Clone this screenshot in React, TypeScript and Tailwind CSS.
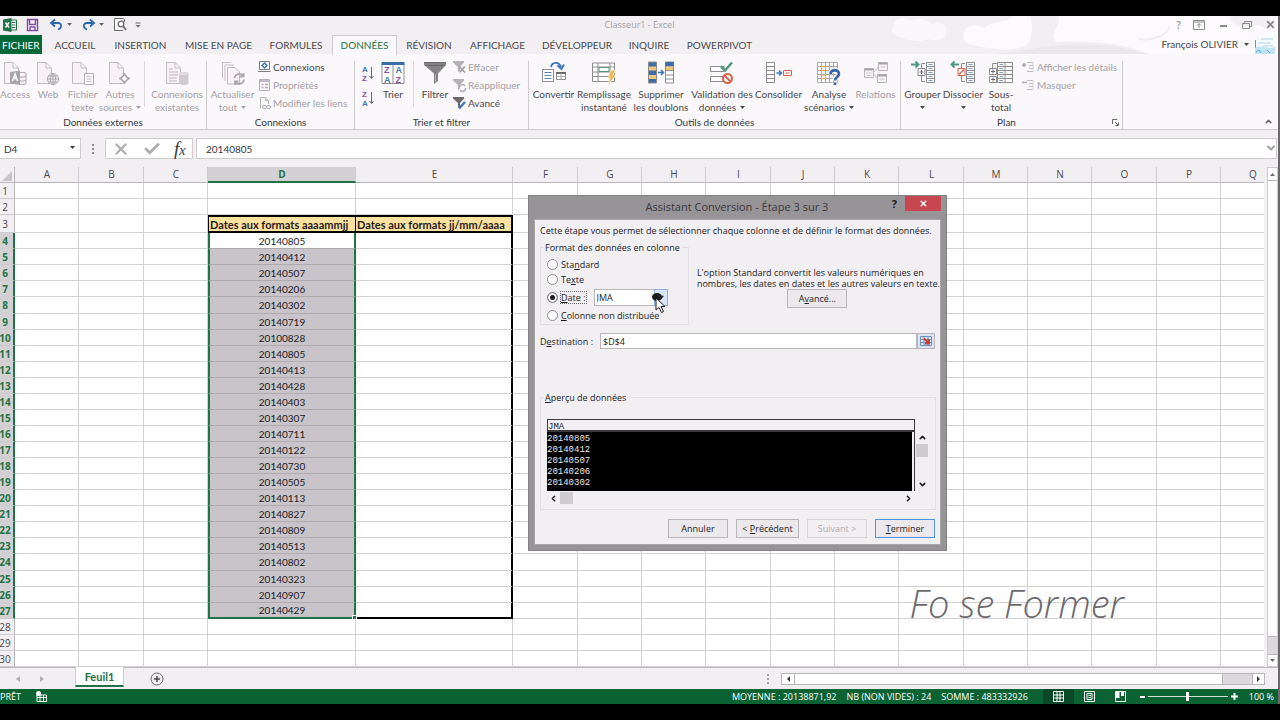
import type { ReactNode } from 'react';
import clsx from 'clsx';
import { Check, ChevronDown, ChevronLeft, ChevronRight, ChevronUp, X } from 'lucide-react';

/* ---------- data ---------- */

const tabs = [
  { label: 'ACCUEIL', width: 'w-[66px]' },
  { label: 'INSERTION', width: 'w-[65px]' },
  { label: 'MISE EN PAGE', width: 'w-[91px]' },
  { label: 'FORMULES', width: 'w-[64px]' },
  { label: 'DONNÉES', width: 'w-[65px] ml-1', active: true },
  { label: 'RÉVISION', width: 'w-[64px]' },
  { label: 'AFFICHAGE', width: 'w-[73px]' },
  { label: 'DÉVELOPPEUR', width: 'w-[86px]' },
  { label: 'INQUIRE', width: 'w-[58px]' },
  { label: 'POWERPIVOT', width: 'w-[83px]' },
];

const columns = [
  { name: 'A', width: 'w-[64px]' },
  { name: 'B', width: 'w-[65px]' },
  { name: 'C', width: 'w-[64px]' },
  { name: 'D', width: 'w-[148px]' },
  { name: 'E', width: 'w-[157px]' },
  { name: 'F', width: 'w-[65px]' },
  { name: 'G', width: 'w-[64px]' },
  { name: 'H', width: 'w-[64px]' },
  { name: 'I', width: 'w-[65px]' },
  { name: 'J', width: 'w-[64px]' },
  { name: 'K', width: 'w-[64px]' },
  { name: 'L', width: 'w-[65px]' },
  { name: 'M', width: 'w-[64px]' },
  { name: 'N', width: 'w-[64px]' },
  { name: 'O', width: 'w-[65px]' },
  { name: 'P', width: 'w-[64px]' },
  { name: 'Q', width: 'w-[64px]' },
];

const dates = [
  '20140805', '20140412', '20140507', '20140206', '20140302', '20140719',
  '20100828', '20140805', '20140413', '20140428', '20140403', '20140307',
  '20140711', '20140122', '20140730', '20140505', '20140113', '20140827',
  '20140809', '20140513', '20140802', '20140323', '20140907', '20140429',
];

const firstDateRow = 4;
const lastDateRow = firstDateRow + dates.length - 1;
const rows = Array.from({ length: 30 }, (_, i) => i + 1);

/* ---------- ribbon icons ---------- */

function Svg({ children, w = 24, h = 24 }: { children: ReactNode; w?: number; h?: number }) {
  return (
    <svg width={w} height={h} viewBox={`0 0 ${w} ${h}`} fill="none" className="shrink-0 overflow-visible" aria-hidden="true">
      {children}
    </svg>
  );
}

const page = <path d="M1.5 1.5H10L15.5 7V22.500H1.500Z M10 1.500V7H15.500" fill="#f8f2f8" stroke="#c0bcc1" />;

const AccessIcon = () => (
  <Svg>
    {page}
    <path d="M15 12.500V22.500C17 24 23 24 23 22.500V12.500C23 11 17 11 15 12.500M15 15C17 16.500 21 16.500 23 15M15 19C17 20.500 21 20.500 23 19" fill="#f8f2f8" stroke="#a9a6aa" />
    <path d="M7 11L17 9.500V24L7 22.500Z" fill="#a9a6aa" />
    <path d="M9.500 20L12 13L14.500 20M10.500 17.500H13.500" stroke="#fff" strokeWidth="1.500" />
  </Svg>
);

const WebIcon = () => (
  <Svg>
    {page}
    <circle cx="17" cy="18" r="5.500" fill="#f8f2f8" stroke="#aba8ac" />
    <path d="M11.500 18H22.500M12.500 15H21.500M12.500 21H21.500M17 12.500V23.500M17 12.500C13.500 15 13.500 21 17 23.500M17 12.500C20.500 15 20.500 21 17 23.500" stroke="#aba8ac" />
  </Svg>
);

const TextFileIcon = () => (
  <Svg>
    {page}
    <path d="M13.500 12.500H22.500V23.500H13.500Z" fill="#fcf8fc" stroke="#b3b0b4" />
    <path d="M15.500 15.500H20.500M15.500 18H20.500M15.500 20.500H20.500" stroke="#c2bfc3" />
  </Svg>
);

const OtherSourcesIcon = () => (
  <Svg>
    {page}
    <path d="M16.500 12V23M11 17.500H22" stroke="#a5a2a6" strokeWidth="1.500" />
    <path d="M16.500 13.500L20.500 17.500L16.500 21.500L12.500 17.500Z" fill="#fbf8fc" stroke="#a5a2a6" strokeWidth="1.500" />
  </Svg>
);

const ExistingIcon = () => (
  <Svg>
    {page}
    <path d="M4 8H8M4 11H13M4 14H13M4 17H12M4 20H12" stroke="#bbb8bc" />
    <path d="M14 12.500V22.500C16 24.500 22 24.500 23.500 22.500V12.500C22 10.500 16 10.500 14 12.500Z" fill="#cfccd0" />
    <ellipse cx="18.750" cy="12.500" rx="4.750" ry="1.500" fill="#dfdce0" />
  </Svg>
);

const RefreshIcon = () => (
  <Svg>
    <path d="M1.500 17V1.500H10M4 20V4H13" stroke="#c0bcc1" />
    <path d="M6.500 6.500H14L18.500 11V23H6.500Z" fill="#f8f2f8" stroke="#c0bcc1" />
    <path d="M13.500 17A5 5 0 0 1 22 14.500M22.500 12V15.500H19M23 18.500A5 5 0 0 1 14.500 21.500M14 24V20.500H17.500" stroke="#aba8ac" strokeWidth="1.800" />
  </Svg>
);

const SortLetters = ({ top, bottom }: { top: string; bottom: string }) => (
  <Svg w={13} h={17}>
    <g fontSize="8" fontWeight="700" fontFamily="Liberation Sans">
      <text x="0" y="7" fill={top === 'A' ? '#3d75b8' : '#8e4fa8'}>{top}</text>
      <text x="0" y="16" fill={bottom === 'A' ? '#3d75b8' : '#8e4fa8'}>{bottom}</text>
    </g>
    <path d="M9.500 2V13M7.500 11L9.500 13.500L11.500 11" stroke="#6b696c" />
  </Svg>
);

const SortIcon = () => (
  <Svg>
    <path d="M1 3H23V22.500H1Z" fill="#fff" stroke="#8e8b8f" />
    <path d="M.5 1H23.500V4H.5Z" fill="#3b6ea8" />
    <path d="M12 4V22.500" stroke="#8e8b8f" />
    <g fontSize="9" fontWeight="700" fontFamily="Liberation Sans">
      <text x="3" y="11.500" fill="#8e4fa8">Z</text>
      <text x="3" y="21.500" fill="#3d75b8">A</text>
      <text x="14.500" y="11.500" fill="#3d75b8">A</text>
      <text x="14.500" y="21.500" fill="#8e4fa8">Z</text>
    </g>
  </Svg>
);

const FilterIcon = () => (
  <Svg>
    <path d="M1 1H23V4L15 12.500V20L11 23V12.500L1 4Z" fill="#858286" />
    <path d="M1 1.500H23M2 4.500H22" stroke="#6c696d" />
    <path d="M12.500 13V21" stroke="#b4b1b5" />
  </Svg>
);

const ConvertIcon = () => (
  <Svg>
    <path d="M9 6C10 1 17 0 19 6M15.500 4.500L19.500 8L22 3.500" stroke="#3d75b8" strokeWidth="1.800" />
    <path d="M.5 8.500H11.500V20.500H.5Z" fill="#fff" stroke="#8e8b8f" />
    <path d="M2.500 11.500H9.500M2.500 14.500H9.500M2.500 17.500H9.500" stroke="#5e84b5" />
    <path d="M14.500 11.500H23.500V18.500H14.500Z" fill="#fff" stroke="#8e8b8f" />
    <path d="M14 12H24" stroke="#6c696d" strokeWidth="2" />
    <path d="M19 12V18.500M14.500 15.500H23.500" stroke="#aba8ac" />
  </Svg>
);

const FlashFillIcon = () => (
  <Svg>
    <path d="M.5 2H22.500V20.500H.5Z" fill="#fff" />
    <path d="M.5 2H22.500V20.500H.5ZM.5 6H22.500M.5 11H22.500M.5 15.500H22.500M6 2V20.500M18 2V20.500" stroke="#8e8b8f" />
    <path d="M7 6.500H17V10.500H7Z" fill="#fff" stroke="#5a9a7c" />
    <path d="M19 9H23.500L21 14H24L16 24L18 17H15.500Z" fill="#f0b75b" stroke="#fff" strokeWidth=".6" />
  </Svg>
);

const DuplicatesIcon = () => (
  <Svg w={26}>
    <path d="M.5 1H8.500V22H.5Z" fill="#3b6ea8" stroke="#8e8b8f" />
    <path d="M1 5.500H8V9.500H1ZM1 14H8V18H1Z" fill="#f0c878" />
    <path d="M17.500 1H25.500V22H17.500Z" fill="#fff" stroke="#8e8b8f" />
    <path d="M17.500 1H25.500V5.500H17.500Z" fill="#3b6ea8" />
    <path d="M18 5.500H25V9.500H18Z" fill="#f0c878" />
    <path d="M17.500 9.500H25.500M17.500 14H25.500M17.500 18H25.500" stroke="#8e8b8f" />
    <path d="M10 11.500H15M13 9L15.500 11.500L13 14" stroke="#3d75b8" strokeWidth="1.500" />
  </Svg>
);

const ValidationIcon = () => (
  <Svg>
    <path d="M.5 5.500H14V10.500H.5ZM.5 15.500H13V20.500H.5Z" fill="#fff" stroke="#8e8b8f" />
    <path d="M11 5.500L15 9.500L22 1.500" stroke="#4f9a7c" strokeWidth="2.500" />
    <circle cx="17.500" cy="17.500" r="4.500" fill="#fff" stroke="#d9604a" strokeWidth="2" />
    <path d="M14.500 14.500L20.500 20.500" stroke="#d9604a" strokeWidth="2" />
  </Svg>
);

const ConsolidateIcon = () => (
  <Svg w={26}>
    <path d="M.5 1.500H8.500V21.500H.5ZM.5 5.500H8.500M.5 9.500H8.500M.5 13.500H8.500M.5 17.500H8.500" fill="#fff" stroke="#8e8b8f" />
    <path d="M10.500 12H15M13 9.500L15.500 12L13 14.500" stroke="#3d75b8" strokeWidth="1.500" />
    <path d="M17.500 9.500H25.500V14.500H17.500ZM19.500 12H23.500" fill="#fff" stroke="#d9604a" />
  </Svg>
);

const WhatIfIcon = () => (
  <Svg>
    <path d="M.5 1.500H20.500V21.500H.5ZM.5 5.500H20.500M.5 9.500H20.500M.5 13.500H20.500M.5 17.500H20.500M4.500 1.500V21.500M8.500 1.500V21.500M12.500 1.500V21.500M16.500 1.500V21.500" fill="#fff" stroke="#aba8ac" />
    <path d="M4.500 5.500H8.500V9.500H4.500ZM4.500 14H8.500V17.500H4.500Z" fill="#fff" stroke="#eaa04f" strokeWidth="1.200" />
    <path d="M13.500 13C13.500 8 22 8 22 13C22 16 18 16 18 19.500M18 21.500V24" stroke="#fff" strokeWidth="5" />
    <path d="M13.500 13C13.500 8 22 8 22 13C22 16 18 16 18 19.500M18 21.500V24" stroke="#3668ac" strokeWidth="2.800" />
  </Svg>
);

const RelationsIcon = () => (
  <Svg>
    <path d="M9 12L15 5M9 12L14 18" stroke="#c0bdc1" />
    <path d="M.5 7.500H9.500V16.500H.5ZM14.500 1.500H23.500V9.500H14.500ZM13.500 13.500H22.500V21.500H13.500Z" fill="#f8f2f8" stroke="#bbb8bc" />
    <path d="M.5 8.500H9.500M14.500 2.500H23.500M13.500 14.500H22.500" stroke="#a9a6aa" strokeWidth="2" />
    <path d="M2.500 12H7.500M2.500 14.500H7.500M16.500 6H21.500M15.500 18H20.500" stroke="#c9c6ca" />
  </Svg>
);

const GroupIcon = ({ remove = false }: { remove?: boolean }) => (
  <Svg w={26}>
    <path d="M16.500 1.500H24.500V21.500H16.500ZM16.500 5.500H24.500M16.500 9.500H24.500M16.500 13.500H24.500M16.500 17.500H24.500" fill="#fff" stroke="#8e8b8f" />
    <path d="M18.500 3.500H22.500M18.500 7.500H22.500M18.500 11.500H22.500M18.500 15.500H22.500M18.500 19.500H22.500" stroke="#7d9cc4" />
    <path d="M15 2.500H11.500V7M11.500 15V20.500H15" stroke="#8e8b8f" />
    <path d="M8 7.500H15V14.500H8Z" fill="#fff" stroke={remove ? '#d9604a' : '#8e8b8f'} />
    {remove ? (
      <>
        <path d="M9 13.500L14 8.500" stroke="#d9604a" strokeWidth="1.500" />
        <path d="M9 3.500H2M4.500 .5L1.500 3.500L4.500 6.500" stroke="#4f9a7c" strokeWidth="2" />
      </>
    ) : (
      <>
        <path d="M9.500 11H13.500M11.500 9V13" stroke="#6c696d" />
        <path d="M1 3.500H8M5.500 .5L8.500 3.500L5.500 6.500" stroke="#4f9a7c" strokeWidth="2" />
      </>
    )}
  </Svg>
);

const SubtotalIcon = () => (
  <Svg w={26}>
    <path d="M9.500 1.500H24.500V21.500H9.500ZM9.500 5.500H24.500M9.500 9.500H24.500M9.500 13.500H24.500M9.500 17.500H24.500M17 1.500V21.500" fill="#fff" stroke="#8e8b8f" />
    <path d="M11.500 3.500H15M11.500 7.500H15M11.500 11.500H15M11.500 15.500H15M11.500 19.500H15" stroke="#7d9cc4" />
    <path d="M9.500 2.500H4.500V7" stroke="#8e8b8f" />
    <path d="M1.500 7.500H8.500V13.500H1.500ZM1.500 15.500H8.500V21.500H1.500Z" fill="#fff" stroke="#8e8b8f" />
    <path d="M3 10.500H7M5 8.500V12.500M3 18.500H7M5 16.500V20.500" stroke="#6c696d" />
  </Svg>
);

const ConnectionsIcon = () => (
  <Svg w={13} h={12}>
    <path d="M1.500 .5H11.500V8.500H1.500ZM0 10.500H12.500" fill="#fff" stroke="#7f7c80" />
    <path d="M6.500 2L9 4.500L6.500 7L4 4.500Z" stroke="#3d75b8" strokeWidth="1.500" />
  </Svg>
);

const PropertiesIcon = () => (
  <Svg w={13} h={12}>
    <path d="M1.500 .5H11.500V11.500H1.500Z" fill="#fbf6fb" stroke="#b4b1b5" />
    <path d="M1 2H12M3.500 5.500H5.500M3.500 8.500H5.500M7 5.500H10M7 8.500H10" stroke="#b7a6be" strokeWidth="1.500" />
  </Svg>
);

const LinksIcon = () => (
  <Svg w={13} h={12}>
    <path d="M2.500 11.500V.5H7.500L10.500 3.500V7M7.500 .5V3.500H10.500" stroke="#b9b6ba" />
    <rect x="4.500" y="8.500" width="4" height="3" rx="1.500" stroke="#b0adb1" />
    <rect x="8.500" y="8.500" width="4" height="3" rx="1.500" stroke="#b0adb1" />
  </Svg>
);

const SmallFilter = ({ kind }: { kind: 'clear' | 'reapply' | 'advanced' }) => (
  <Svg w={13} h={12}>
    <path d="M0 0H11V1.500L7 6V9.500L5 11V6L0 1.500Z" fill={kind === 'advanced' ? '#6c696d' : '#b4b1b5'} />
    {kind === 'clear' && <path d="M6.500 5.500L12 11.500M12 5.500L6.500 11.500" stroke="#a09da1" strokeWidth="1.500" />}
    {kind === 'reapply' && <path d="M6.500 8A3 3 0 0 1 12 7M12.500 9A3 3 0 0 1 7 11" stroke="#b0adb1" strokeWidth="1.500" />}
    {kind === 'advanced' && <path d="M6 11.500L12 5" stroke="#3d75b8" strokeWidth="2.500" />}
  </Svg>
);

const DetailIcon = ({ plus = false }: { plus?: boolean }) => (
  <Svg w={13} h={12}>
    <path d={plus ? 'M0 4H4M2 2V6' : 'M0 3.500H5'} stroke="#a9a6aa" strokeWidth="1.500" />
    <path d="M5 1.500H11M7 4.500H11M7 7.500H11M5 10.500H11" stroke="#c0bdc1" />
    <path d="M11 1V11" stroke="#d4d1d5" />
  </Svg>
);

/* ---------- ribbon ---------- */

const Caret = () => (
  <svg width="5" height="3" viewBox="0 0 5 3" className="shrink-0" aria-hidden="true">
    <path d="M0 0H5L2.500 3Z" fill="currentColor" />
  </svg>
);

interface BigButtonProps {
  icon: ReactNode;
  lines: string[];
  width: string;
  disabled?: boolean;
  caret?: boolean;
}

function BigButton({ icon, lines, width, disabled, caret }: BigButtonProps) {
  return (
    <button
      disabled={disabled}
      className={clsx('flex shrink-0 flex-col items-center whitespace-nowrap leading-[13px]', width, disabled && 'text-[#a3a0a4]')}
    >
      <span className="mb-[3px]">{icon}</span>
      {lines.map((line, i) => (
        <span key={line} className="flex items-center gap-1">
          {line}
          {caret && i === 1 && <Caret />}
        </span>
      ))}
      {caret && lines.length === 1 && <span className="pt-[5px]"><Caret /></span>}
    </button>
  );
}

function SmallButton({ icon, label, disabled }: { icon: ReactNode; label: string; disabled?: boolean }) {
  return (
    <button disabled={disabled} className={clsx('flex h-[18px] items-center gap-0.5 whitespace-nowrap', disabled && 'text-[#a3a0a4]')}>
      {icon}
      {label}
    </button>
  );
}

function Group({ label, width, children, launcher }: { label: string; width: string; children: ReactNode; launcher?: boolean }) {
  return (
    <section className={clsx('flex shrink-0 flex-col justify-between border-r border-[#cfccd0]', width)}>
      <div className="flex">{children}</div>
      <div className="flex items-center">
        <h2 className="flex-1 text-center leading-[13px] text-[#3a383b]">{label}</h2>
        {launcher && (
          <button aria-label="Options du plan" className="w-[10px]">
            <Svg w={7} h={7}>
              <path d="M.5 5V.5H5M3 3L6 6M6.500 3.500V6.500H3.500" stroke="#6c696d" />
            </Svg>
          </button>
        )}
      </div>
    </section>
  );
}

const Separator = () => <div className="mx-[3px] h-[46px] w-px bg-[#dcd9dd]" />;

function Ribbon() {
  return (
    <div className="flex h-[76px] shrink-0 items-stretch overflow-hidden border-b border-[#cfccd0] bg-[#fbf8fc] pt-[7px]">
      <Group label="Données externes" width="w-[207px]">
        <BigButton icon={<AccessIcon />} lines={['Access']} width="w-[30px]" disabled />
        <BigButton icon={<WebIcon />} lines={['Web']} width="w-[36px]" disabled />
        <BigButton icon={<TextFileIcon />} lines={['Fichier', 'texte']} width="w-[33px]" disabled />
        <BigButton icon={<OtherSourcesIcon />} lines={['Autres', 'sources']} width="w-[42px]" disabled caret />
        <Separator />
        <BigButton icon={<ExistingIcon />} lines={['Connexions', 'existantes']} width="w-[58px]" disabled />
      </Group>
      <Group label="Connexions" width="w-[148px]">
        <BigButton icon={<RefreshIcon />} lines={['Actualiser', 'tout']} width="w-[51px]" disabled caret />
        <div className="-mt-[3px]">
          <SmallButton icon={<ConnectionsIcon />} label="Connexions" />
          <SmallButton icon={<PropertiesIcon />} label="Propriétés" disabled />
          <SmallButton icon={<LinksIcon />} label="Modifier les liens" disabled />
        </div>
      </Group>
      <Group label="Trier et filtrer" width="w-[174px]">
        <div className="ml-[7px] flex w-[14px] flex-col gap-2 pt-1">
          <button aria-label="Trier de A à Z"><SortLetters top="A" bottom="Z" /></button>
          <button aria-label="Trier de Z à A"><SortLetters top="Z" bottom="A" /></button>
        </div>
        <BigButton icon={<SortIcon />} lines={['Trier']} width="w-[34px]" />
        <Separator />
        <BigButton icon={<FilterIcon />} lines={['Filtrer']} width="w-[36px]" />
        <div className="-mt-[3px]">
          <SmallButton icon={<SmallFilter kind="clear" />} label="Effacer" disabled />
          <SmallButton icon={<SmallFilter kind="reapply" />} label="Réappliquer" disabled />
          <SmallButton icon={<SmallFilter kind="advanced" />} label="Avancé" />
        </div>
      </Group>
      <Group label="Outils de données" width="w-[372px]">
        <BigButton icon={<ConvertIcon />} lines={['Convertir']} width="w-[49px]" />
        <BigButton icon={<FlashFillIcon />} lines={['Remplissage', 'instantané']} width="w-[52px]" />
        <BigButton icon={<DuplicatesIcon />} lines={['Supprimer', 'les doublons']} width="w-[62px]" />
        <BigButton icon={<ValidationIcon />} lines={['Validation des', 'données']} width="w-[60px]" caret />
        <BigButton icon={<ConsolidateIcon />} lines={['Consolider']} width="w-[53px]" />
        <BigButton icon={<WhatIfIcon />} lines={['Analyse', 'scénarios']} width="w-[48px]" caret />
        <BigButton icon={<RelationsIcon />} lines={['Relations']} width="w-[45px]" disabled />
      </Group>
      <Group label="Plan" width="w-[222px]" launcher>
        <BigButton icon={<GroupIcon />} lines={['Grouper']} width="w-[43px]" caret />
        <BigButton icon={<GroupIcon remove />} lines={['Dissocier']} width="w-[38px]" caret />
        <BigButton icon={<SubtotalIcon />} lines={['Sous-', 'total']} width="w-[38px]" />
        <div className="-mt-[3px] ml-0.5">
          <SmallButton icon={<DetailIcon plus />} label="Afficher les détails" disabled />
          <SmallButton icon={<DetailIcon />} label="Masquer" disabled />
        </div>
      </Group>
      <button aria-label="Réduire le ruban" className="mt-auto mr-[5px] mb-[3px] ml-auto">
        <ChevronUp size={9} strokeWidth={4} className="text-[#6c696d]" />
      </button>
    </div>
  );
}

/* ---------- title bar and tabs ---------- */

const Clouds = () => (
  <svg viewBox="0 0 400 38" className="absolute top-0 right-0 h-[38px] w-[400px]" aria-hidden="true">
    <path d="M16 10C14 2 28 0 34 5C40 0 50 4 54 8C62 3 70 10 68 16C70 24 56 26 50 23C40 28 28 22 22 21C14 20 12 14 16 10Z" fill="#faf8fb" />
    <path d="M86 18C86 8 100 8 106 12C114 4 130 8 134 0H152C156 14 154 26 146 31C130 36 106 32 96 29C88 28 84 24 86 18Z" fill="#fcfafc" />
    <path d="M180 0H400V38H270C250 28 215 24 178 26C170 18 184 10 180 0Z" fill="#fcfafc" />
    <path d="M118 38C150 34 200 24 240 31L272 38Z" fill="#ebe8ec" />
    <path d="M260 23C276 25 288 20 292 10" fill="none" stroke="#f0edf1" strokeWidth="2" />
    <path d="M352 2C352 10 368 14 380 9L392 14V0H352Z" fill="#f2eff3" />
  </svg>
);

function TitleBar() {
  return (
    <div className="relative flex h-[19px] shrink-0 items-center pr-0.5 pb-0.5 pl-[3px] text-[#6c696d]">
      <div className="flex flex-1 items-center">
        <Svg w={14} h={14}>
          <path d="M7 2H13.500V12H7Z" fill="#fff" stroke="#1f7246" />
          <path d="M9 4.500H12.500M9 7H12.500M9 9.500H12.500" stroke="#1f7246" />
          <path d="M0 1.500L8.500 0V14L0 12.500Z" fill="#1f7246" />
          <path d="M2.500 4.500L6 9.500M6 4.500L2.500 9.500" stroke="#fff" strokeWidth="1.500" />
        </Svg>
        <button aria-label="Enregistrer" className="ml-[9px]">
          <Svg w={13} h={12}>
            <path d="M1.500 .5H11.500V11.500H1.500ZM3.500 1V5.500H9.500V1M4 11.500V8H9V11.500" fill="#fff" stroke="#8348a0" strokeWidth="1.400" />
          </Svg>
        </button>
        <button aria-label="Annuler" className="ml-[11px]">
          <Svg w={13} h={11}>
            <path d="M5 .5L1 4L5 7.500M1.500 4H8C12.500 4 12 9 8 10.500" stroke="#2f66ae" strokeWidth="1.800" />
          </Svg>
        </button>
        <span className="ml-1"><Caret /></span>
        <button aria-label="Rétablir" className="ml-[10px]">
          <Svg w={13} h={11}>
            <path d="M8 .5L12 4L8 7.500M11.500 4H5C.5 4 1 9 5 10.500" stroke="#2f66ae" strokeWidth="1.800" />
          </Svg>
        </button>
        <span className="ml-1"><Caret /></span>
        <button aria-label="Aperçu avant impression" className="ml-[10px]">
          <Svg w={13} h={13}>
            <path d="M10.500 4V1.500L9 .5H.5V12.500H9" fill="#fff" stroke="#6c696d" />
            <circle cx="7" cy="6" r="2.800" stroke="#6c696d" strokeWidth="1.300" />
            <path d="M9 8L12 12" stroke="#6c696d" strokeWidth="1.800" />
          </Svg>
        </button>
        <button aria-label="Personnaliser la barre" className="ml-2">
          <Svg w={6} h={6}>
            <path d="M.5 1H5.500" stroke="#6c696d" />
            <path d="M.5 3H5.500L3 5.500Z" fill="#6c696d" />
          </Svg>
        </button>
      </div>
      <h1 className="font-['Open_Sans',sans-serif] text-[9px] text-[#a3a0a4]">Classeur1 - Excel</h1>
      <div className="flex flex-1 items-center justify-end gap-3">
        <button aria-label="Aide" className="text-[11px] leading-none font-bold text-[#a3a0a4]">?</button>
        <button aria-label="Options d'affichage">
          <Svg w={12} h={10}>
            <path d="M.5 .5H11.500V9.500H.5ZM.5 2H11.500M6 8V4M4 5.500L6 3.500L8 5.500" stroke="#8e8b8f" />
          </Svg>
        </button>
        <button aria-label="Réduire">
          <Svg w={12} h={10}><path d="M3 6H10" stroke="#8e8b8f" strokeWidth="2" /></Svg>
        </button>
        <button aria-label="Restaurer">
          <Svg w={12} h={10}><path d="M3.500 3V1.500H10.500V6.500H9M1.500 3.500H8.500V8.500H1.500Z" stroke="#8e8b8f" /></Svg>
        </button>
        <button aria-label="Fermer"><X size={11} strokeWidth={4} className="text-[#8e8b8f]" /></button>
      </div>
    </div>
  );
}

function Tabs() {
  return (
    <nav className="relative flex h-[19px] shrink-0 items-stretch">
      <a href="#fichier" className="flex w-[42px] items-center bg-[#04683a] pt-px pl-0.5 text-white">FICHIER</a>
      {tabs.map((tab) => (
        <a
          key={tab.label}
          href="#ruban"
          className={clsx(
            'flex items-center justify-center whitespace-nowrap',
            tab.width,
            tab.active ? '-mb-px border border-b-0 border-[#cfccd0] bg-[#fbf8fc] text-[#1f7246]' : 'pt-px'
          )}
        >
          {tab.label}
        </a>
      ))}
      <button className="mr-[3px] ml-auto flex items-center gap-1.5 whitespace-nowrap">
        François OLIVIER <Caret />
        <Svg w={20} h={18}>
          <path d="M0 0H20V18H0Z" fill="#f4f9fc" />
          <path d="M.5 4V16" stroke="#8e8b8f" />
          <path d="M0 12C6 8 12 14 20 11V18H0Z" fill="#bfe3f3" />
          <path d="M6 3H18M3 7H16M8 10H18" stroke="#b8d2e2" />
          <path d="M1 16L4 14L6 17M12 14L15 17" stroke="#5aa9d4" />
        </Svg>
      </button>
    </nav>
  );
}

/* ---------- formula bar ---------- */

function FormulaBar() {
  return (
    <div className="my-2 flex h-[21px] shrink-0 items-stretch pr-px text-[#3a383b]">
      <div className="relative w-[81px]">
        <input aria-label="Zone Nom" defaultValue="D4" className="h-full w-full border border-l-0 border-[#cfccd0] bg-white pl-1 text-[10px]" />
        <span className="absolute top-2 right-1.5"><Caret /></span>
      </div>
      <div className="flex w-6 flex-col items-center justify-center gap-0.5">
        <span className="size-0.5 bg-[#8e8b8f]" />
        <span className="size-0.5 bg-[#8e8b8f]" />
        <span className="size-0.5 bg-[#8e8b8f]" />
      </div>
      <div className="mr-[3px] flex w-[88px] items-center justify-around border border-[#cfccd0] bg-white">
        <button aria-label="Annuler la saisie"><X size={18} strokeWidth={3} className="text-[#b0adb1]" /></button>
        <button aria-label="Valider la saisie"><Check size={18} strokeWidth={4} className="text-[#b0adb1]" /></button>
        <button aria-label="Insérer une fonction" className="font-['Liberation_Serif',serif] text-[19px] leading-none italic">
          f<span className="text-[14px]">x</span>
        </button>
      </div>
      <div className="relative flex-1">
        <input aria-label="Barre de formule" defaultValue="20140805" className="h-full w-full border border-[#cfccd0] bg-white pl-[9px] text-[10px]" />
        <ChevronDown size={12} strokeWidth={4} className="absolute top-1 right-0 text-[#a3a0a4]" />
      </div>
    </div>
  );
}

/* ---------- worksheet ---------- */

function cellText(column: string, row: number) {
  if (row === 3 && column === 'D') return 'Dates aux formats aaaammjj';
  if (row === 3 && column === 'E') return 'Dates aux formats jj/mm/aaaa';
  if (column === 'D') return dates[row - firstDateRow] ?? '';
  return '';
}

function cellStyle(column: string, row: number) {
  const inRange = row >= firstDateRow && row <= lastDateRow;
  if (row === 3 && (column === 'D' || column === 'E')) {
    return clsx('border-y-2 border-black bg-[#ffe2a0] px-px py-0 text-[11px] font-bold', column === 'D' ? 'border-x' : 'border-r-2');
  }
  if (column === 'D' && inRange) {
    return clsx(
      'border-x-2 border-x-[#217346] px-0 pt-0.5 pb-0 text-center',
      row === firstDateRow ? 'bg-white' : 'bg-[#c8c4c9]',
      row === lastDateRow ? 'relative border-b-2 border-b-[#217346]' : 'border-b border-b-[#aeabaf]'
    );
  }
  if (column === 'E' && inRange) {
    return clsx('border-r-2 border-r-black p-0', row === lastDateRow ? 'border-b-2 border-b-black' : 'border-b border-b-[#d4d1d5]');
  }
  return 'border-r border-b border-[#d4d1d5] p-0';
}

function Worksheet() {
  return (
    <table className="h-full w-[1285px] table-fixed border-separate border-spacing-0 bg-white text-[10px] leading-[11px] text-[#1c1b1d]">
      <colgroup>
        <col className="w-[15px]" />
        {columns.map((c) => (
          <col key={c.name} className={c.width} />
        ))}
      </colgroup>
      <thead className="font-['Open_Sans',sans-serif] text-[#4a484b]">
        <tr className="h-4">
          <th className="border-r border-b border-[#b9b6ba] bg-[#f2eff3] p-0">
            <Svg w={12} h={12}><path d="M12 2V12H2Z" fill="#c8c5c9" /></Svg>
          </th>
          {columns.map((c) => (
            <th
              key={c.name}
              scope="col"
              className={clsx(
                'border-r border-r-[#cfccd0] p-0 pl-px',
                c.name === 'D'
                  ? 'border-b-2 border-b-[#217346] bg-[#d4d1d5] font-bold text-[#217346]'
                  : 'border-b border-b-[#b9b6ba] bg-[#f2eff3] font-normal'
              )}
            >
              {c.name}
            </th>
          ))}
        </tr>
      </thead>
      <tbody>
        {rows.map((row) => {
          const selected = row >= firstDateRow && row <= lastDateRow;
          return (
            <tr key={row} className={row === 3 ? 'h-[18px]' : 'h-4'}>
              <th
                scope="row"
                className={clsx(
                  "border-b border-b-[#cfccd0] px-0 pt-0.5 pb-0 font-['Open_Sans',sans-serif]",
                  selected
                    ? 'border-r-2 border-r-[#217346] bg-[#d4d1d5] font-bold text-[#217346]'
                    : 'border-r border-r-[#b9b6ba] bg-[#f2eff3] font-normal text-[#4a484b]'
                )}
              >
                <span className="flex w-[10px] justify-center">{row}</span>
              </th>
              {columns.map((c) => (
                <td key={c.name} className={clsx('whitespace-nowrap', cellStyle(c.name, row))}>
                  {cellText(c.name, row)}
                  {c.name === 'D' && row === lastDateRow && (
                    <span className="absolute -right-[3px] -bottom-[3px] size-[5px] border border-white bg-[#217346]" />
                  )}
                </td>
              ))}
            </tr>
          );
        })}
      </tbody>
    </table>
  );
}

function VerticalScroll() {
  return (
    <div className="ml-[3px] flex w-[11px] shrink-0 flex-col border border-[#cfccd0] bg-[#dcd9dd]">
      <button aria-label="Défiler vers le haut" className="flex h-3 shrink-0 items-center justify-center bg-white">
        <Svg w={5} h={3}><path d="M0 3L2.500 0L5 3Z" fill="#6c696d" /></Svg>
      </button>
      <div className="flex-1 border-y border-[#b9b6ba] bg-white" />
      <div className="h-[17px] shrink-0" />
      <button aria-label="Défiler vers le bas" className="flex h-3 shrink-0 items-center justify-center border-t border-[#b9b6ba] bg-white">
        <Svg w={5} h={3}><path d="M0 0L2.500 3L5 0Z" fill="#6c696d" /></Svg>
      </button>
    </div>
  );
}

/* ---------- conversion wizard ---------- */

interface FormatRadioProps {
  id: string;
  before?: string;
  hot: string;
  after: string;
  checked?: boolean;
}

function FormatRadio({ id, before = '', hot, after, checked }: FormatRadioProps) {
  return (
    <span className="flex items-center gap-[3px]">
      <input
        type="radio"
        id={id}
        name="format"
        defaultChecked={checked}
        className="size-[11px] appearance-none rounded-full border border-[#8e8b8f] bg-white checked:bg-[#1c1b1d] checked:shadow-[inset_0_0_0_2px_white]"
      />
      <label htmlFor={id} className={clsx('whitespace-nowrap', checked && 'outline outline-dotted outline-[#6c696d]')}>
        {before}<u>{hot}</u>{after}
      </label>
    </span>
  );
}

const Cursor = () => (
  <svg width="22" height="26" viewBox="0 0 22 26" className="pointer-events-none absolute top-0.5 left-[57px]" aria-hidden="true">
    <ellipse cx="6" cy="6" rx="5" ry="4" fill="#1c1b1d" />
    <path d="M5 7V19L8 16.500L10.500 21.500L12.500 20.500L10 15.500H14Z" fill="#fff" stroke="#1c1b1d" />
  </svg>
);

const wizardButton = 'h-[19px] border border-[#b9b6ba] bg-[#ece9ed] text-center';

function Wizard() {
  return (
    <div
      role="dialog"
      aria-labelledby="wizard-title"
      className="absolute top-[179px] left-[528px] flex h-[356px] w-[419px] flex-col border border-[#858286] bg-[#979498] px-[5px] pb-[5px] font-['Open_Sans','Noto_Sans',sans-serif] text-[9px] leading-[11px] text-[#1c1b1d]"
    >
      <div className="flex h-[23px] shrink-0 items-start">
        <h2 id="wizard-title" className="flex-1 pl-[48px] text-center text-[11px] leading-[22px] text-[#3a383b]">
          Assistant Conversion - Étape 3 sur 3
        </h2>
        <button aria-label="Aide" className="mr-2 text-[11px] leading-[15px] font-bold">?</button>
        <button aria-label="Fermer" className="flex h-[15px] w-9 items-center justify-center bg-[#c8474f] text-white">
          <X size={9} strokeWidth={4} />
        </button>
      </div>

      <div className="flex flex-1 flex-col border border-[#a9a6aa] bg-[#f2eff3] px-[5px] pt-[5px]">
        <p className="whitespace-nowrap">
          Cette étape vous permet de sélectionner chaque colonne et de définir le format des données.
        </p>

        <div className="mt-[6px] flex">
          <fieldset className="h-[83px] w-[147px] shrink-0 border border-[#e2dfe3] px-[6px]">
            <legend className="-ml-1 px-0.5 whitespace-nowrap">Format des données en colonne</legend>
            <div className="mt-1.5 flex flex-col gap-1">
              <FormatRadio id="standard" before="Sta" hot="n" after="dard" />
              <FormatRadio id="texte" before="Te" hot="x" after="te" />
              <div className="flex h-[17px] items-center gap-2">
                <FormatRadio id="date" hot="D" after="ate :" checked />
                <span className="relative">
                  <select aria-label="Format de date" className="block h-[17px] w-[74px] appearance-none border border-[#b9b6ba] bg-white pl-0.5">
                    <option>JMA</option>
                  </select>
                  <span className="pointer-events-none absolute top-0 right-0 flex h-[17px] w-[14px] items-center justify-center border border-[#8fb0dc] bg-[#d9e6f6]">
                    <ChevronDown size={9} strokeWidth={4} />
                  </span>
                  <Cursor />
                </span>
              </div>
              <FormatRadio id="ignore" hot="C" after="olonne non distribuée" />
            </div>
          </fieldset>
          <div className="flex flex-1 flex-col items-center pt-[25px] pl-[6px]">
            <p className="ml-0.5 self-start whitespace-nowrap">
              L'option Standard convertit les valeurs numériques en
              <br />
              nombres, les dates en dates et les autres valeurs en texte.
            </p>
            <button className={clsx(wizardButton, 'w-[60px]')}>A<u>v</u>ancé...</button>
          </div>
        </div>

        <div className="mt-2 flex h-4 items-center">
          <label htmlFor="destination" className="w-[60px]">D<u>e</u>stination :</label>
          <input id="destination" defaultValue="$D$4" className="h-4 min-w-0 flex-1 border border-[#b9b6ba] bg-white pl-0.5" />
          <button aria-label="Sélectionner la plage" className="flex h-4 w-[18px] items-center justify-center border border-[#b9b6ba] bg-[#dbe5f2]">
            <Svg w={12} h={10}>
              <path d="M.5 .5H11.500V9.500H.5ZM.5 3.500H11.500M.5 6.500H11.500M4 .5V9.500M8 .5V9.500" stroke="#6f8fbf" />
              <path d="M4 2.500L9 7M9 3.500V7.500H5" stroke="#d03a2c" strokeWidth="2" />
            </Svg>
          </button>
        </div>

        <fieldset className="mt-[43px] h-[118px] border border-[#e2dfe3] px-[6px]">
          <legend className="-ml-1 px-0.5"><u>A</u>perçu de données</legend>
          <div className="mt-4 flex">
            <div className="w-[368px] shrink-0 border-r border-[#3a383b] font-['Liberation_Mono',monospace]">
              <div className="h-[13px] overflow-hidden border border-b-2 border-r-0 border-[#3a383b] pt-0.5 leading-[10px]">JMA</div>
              <div className="mr-0.5 bg-black pt-0.5 pb-[2px] text-[#e8e5e9]">
                {dates.slice(0, 5).map((d) => (
                  <div key={d} className="h-[11px] leading-[11px]">{d}</div>
                ))}
              </div>
            </div>
            <div className="flex w-[14px] flex-col items-center pt-[14px]">
              <ChevronUp size={9} strokeWidth={4} />
              <div className="mt-0.5 h-[13px] w-3 bg-[#cfccd0]" />
              <ChevronDown size={9} strokeWidth={4} className="mt-auto mb-0.5" />
            </div>
          </div>
          <div className="flex h-[14px] w-[368px] items-center">
            <ChevronLeft size={9} strokeWidth={4} className="mx-0.5" />
            <div className="h-3 w-[13px] bg-[#cfccd0]" />
            <ChevronRight size={9} strokeWidth={4} className="mr-0.5 ml-auto" />
          </div>
        </fieldset>

        <div className="mt-[9px] flex justify-end gap-2">
          <button className={clsx(wizardButton, 'w-[60px]')}>Annuler</button>
          <button className={clsx(wizardButton, 'w-[63px]')}>&lt; <u>P</u>récédent</button>
          <button disabled className="h-[19px] w-[60px] border border-[#d9d6da] text-center text-[#b0adb1]">Suivant &gt;</button>
          <button className="h-[19px] w-[60px] border border-[#4f94dc] bg-[#ece9ed] text-center"><u>T</u>erminer</button>
        </div>
      </div>
    </div>
  );
}

/* ---------- sheet tabs and status bar ---------- */

function SheetTabs() {
  return (
    <div className="flex h-[22px] shrink-0 items-stretch border-t border-[#b9b6ba]">
      <div className="flex w-[75px] items-center pl-4">
        <button aria-label="Feuille précédente"><Svg w={4} h={6}><path d="M4 0V6L0 3Z" fill="#b0adb1" /></Svg></button>
        <button aria-label="Feuille suivante" className="ml-5"><Svg w={4} h={6}><path d="M0 0V6L4 3Z" fill="#b0adb1" /></Svg></button>
      </div>
      <button className="-mt-px mb-[2px] w-[49px] border-x border-b-2 border-x-[#cfccd0] border-b-[#217346] bg-white pt-0.5 text-[11px] font-bold text-[#217346]">
        Feuil1
      </button>
      <button aria-label="Nouvelle feuille" className="ml-[26px]">
        <Svg w={14} h={14}>
          <circle cx="7" cy="7" r="6" stroke="#6c696d" />
          <path d="M4 7H10M7 4V10" stroke="#4a484b" strokeWidth="1.500" />
        </Svg>
      </button>
      <div className="ml-auto flex w-[511px] items-center">
        <div className="flex w-[14px] flex-col gap-0.5">
          <span className="size-0.5 bg-[#a3a0a4]" />
          <span className="size-0.5 bg-[#a3a0a4]" />
          <span className="size-0.5 bg-[#a3a0a4]" />
        </div>
        <div className="flex h-[12px] flex-1 border border-[#b9b6ba] bg-[#dcd9dd]">
          <button aria-label="Défiler à gauche" className="flex w-3 items-center justify-center bg-white">
            <Svg w={3} h={6}><path d="M3 0V6L0 3Z" fill="#3a383b" /></Svg>
          </button>
          <div className="flex-1 border-x border-[#b9b6ba] bg-white" />
          <div className="w-[29px]" />
          <button aria-label="Défiler à droite" className="flex w-3 items-center justify-center border-l border-[#b9b6ba] bg-white">
            <Svg w={3} h={6}><path d="M0 0V6L3 3Z" fill="#3a383b" /></Svg>
          </button>
        </div>
        <div className="w-[13px]" />
      </div>
    </div>
  );
}

function StatusBar() {
  return (
    <footer className="flex h-[15px] shrink-0 items-center bg-[#0b6233] pr-1 font-['Open_Sans',sans-serif] text-[9px] whitespace-nowrap text-white">
      <span className="w-9">PRÊT</span>
      <Svg w={11} h={11}>
        <path d="M1 4H10.500V10.500H1Z" fill="#0b6233" stroke="#fff" />
        <path d="M1 6.500H10.500M4 4V10.500M7.500 4V10.500" stroke="#fff" />
        <circle cx="2.500" cy="2.500" r="2.500" fill="#fff" />
      </Svg>
      <div className="ml-auto flex gap-[10px]">
        <span>MOYENNE : 20138871,92</span>
        <span>NB (NON VIDES) : 24</span>
        <span>SOMME : 483332926</span>
      </div>
      <button aria-label="Normal" className="ml-[15px] flex h-full w-[31px] items-center justify-center bg-[#084a27]">
        <Svg w={11} h={11}><path d="M.5 .5H10.500V10.500H.5ZM.5 4H10.500M.5 7H10.500M4 .5V10.500M7 .5V10.500" stroke="#fff" /></Svg>
      </button>
      <button aria-label="Mise en page" className="flex w-[31px] justify-center">
        <Svg w={11} h={11}><path d="M.5 .5H10.500V10.500H.5ZM3 2.500H8V8.500H3ZM4.500 4.500H7M4.500 6.500H7" stroke="#fff" /></Svg>
      </button>
      <button aria-label="Aperçu des sauts de page" className="flex w-[31px] justify-center">
        <Svg w={11} h={11}>
          <path d="M.5 .5H10.500V10.500H.5Z" stroke="#fff" />
          <path d="M1 1H4.500V7H1ZM6 1H9V5H6Z" fill="#fff" />
        </Svg>
      </button>
      <span className="ml-1 h-0.5 w-[5px] bg-white" />
      <input
        type="range"
        aria-label="Zoom"
        defaultValue={50}
        className="mx-[3px] h-px w-20 appearance-none bg-[#cfe3d8] [&::-webkit-slider-thumb]:h-[9px] [&::-webkit-slider-thumb]:w-[3px] [&::-webkit-slider-thumb]:appearance-none [&::-webkit-slider-thumb]:bg-white"
      />
      <Svg w={7} h={7}><path d="M0 3.500H7M3.500 0V7" stroke="#fff" strokeWidth="2" /></Svg>
      <span className="ml-[11px]">100 %</span>
    </footer>
  );
}

export default function App() {
  return (
    <div className="flex h-screen flex-col bg-black py-4 font-['Lato',sans-serif] text-[10px] text-[#4a484b]">
      <div className="relative flex min-h-0 flex-1 flex-col overflow-hidden border-r-2 border-[#6c696d] bg-[#f2eff3]">
        <Clouds />
        <TitleBar />
        <Tabs />
        <Ribbon />
        <FormulaBar />
        <main className="flex min-h-0 flex-1">
          <div className="min-w-0 flex-1 overflow-hidden">
            <Worksheet />
          </div>
          <VerticalScroll />
        </main>
        <SheetTabs />
        <StatusBar />
        <Wizard />
        <p className="pointer-events-none absolute right-[154px] bottom-[80px] font-['Open_Sans',sans-serif] text-[38px] leading-[42px] font-light whitespace-nowrap text-[#6c696d] italic">
          Fo se Former
        </p>
      </div>
    </div>
  );
}
